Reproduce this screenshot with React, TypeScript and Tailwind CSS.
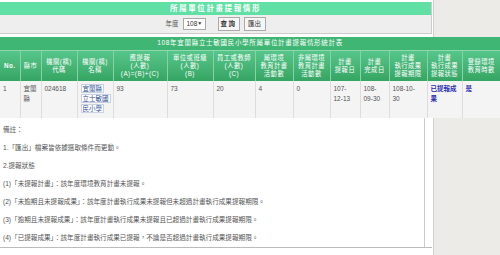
import React from 'react';

const cols = [20, 21, 36, 36, 54, 46, 42, 38, 37, 30, 29, 38, 35, 38];

const headers: React.ReactNode[] = [
  <span className="font-bold">No.</span>,
  '縣市',
  <>機關(構)<br />代碼</>,
  <>機關(構)<br />名稱</>,
  <>應提報<br />(人數)<br />(A)=(B)+(C)</>,
  <>單位或班級<br />(人數)<br />(B)</>,
  <>員工或教師<br />(人數)<br />(C)</>,
  <>屬環境<br />教育計畫<br />活動數</>,
  <>非屬環境<br />教育計畫<br />活動數</>,
  <>計畫<br />提報日</>,
  <>計畫<br />完成日</>,
  <>計畫<br />執行成果<br />提報期限</>,
  <>計畫<br />執行成果<br />提報狀態</>,
  <>登錄環境<br />教育時數</>,
];

const notes = [
  '備註：',
  '1.「匯出」檔案皆依據選取條件而更動。',
  '2.提報狀態',
  '(1)「未提報計畫」：該年度環境教育計畫未提報。',
  '(2)「未逾期且未提報成果」：該年度計畫執行成果未提報但未超過計畫執行成果提報期限。',
  '(3)「逾期且未提報成果」：該年度計畫執行成果未提報且已超過計畫執行成果提報期限。',
  '(4)「已提報成果」：該年度計畫執行成果已提報，不論是否超過計畫執行成果提報期限。',
];

export default function App() {
  return (
    <div className="w-[500px] h-[255px] overflow-hidden bg-[#ecebe8] font-['Liberation_Sans','Noto_Sans_CJK_TC',sans-serif]">
      <div className="w-[434px] h-full bg-white border-r border-[#cfcfcf] pt-[2px]">
        {/* Search box */}
        <div className="w-[432px] border-r border-[#cccccc]">
          <div className="h-[13px] bg-[#60e0a4] flex items-center justify-center text-white font-bold text-[7.5px] tracking-[1.6px]">
            所屬單位計畫提報情形
          </div>
          <div className="h-[19px] bg-[#eeeeee] border-b border-[#cccccc] flex items-center justify-center text-[6.5px] text-[#555]">
            <span className="mr-[4px]">年度</span>
            <div className="w-[23px] h-[12px] bg-white border border-[#aaaaaa] flex items-center justify-between px-[3px] text-[#333]">
              <span>108</span>
              <span className="text-[5px]">▼</span>
            </div>
            <div className="ml-[12px] w-[22px] h-[14px] border border-[#aaaaaa] bg-[#f6f6f6] flex items-center justify-center font-bold text-[#333] tracking-[1.5px]">
              查詢
            </div>
            <div className="ml-[4px] w-[22px] h-[14px] border border-[#aaaaaa] bg-[#f6f6f6] flex items-center justify-center text-[#333]">
              匯出
            </div>
          </div>
        </div>

        {/* Stats table */}
        <table className="mt-[3px] w-[500px] table-fixed border-collapse">
          <colgroup>
            {cols.map((w, i) => (
              <col key={i} style={{ width: w }} />
            ))}
          </colgroup>
          <thead>
            <tr className="h-[13px] bg-[#40b674]">
              <th colSpan={14} className="text-white font-normal text-[6.5px] tracking-[0.7px] text-center border-b border-[#8fd8ae]">
                108年宜蘭縣立士敏國民小學所屬單位計畫提報情形統計表
              </th>
            </tr>
            <tr className="h-[31px] bg-gradient-to-b from-[#58c78c] to-[#35a563]">
              {headers.map((h, i) => (
                <th
                  key={i}
                  className="text-white font-normal text-[6.3px] leading-[7.6px] tracking-[0.5px] text-center align-middle border-r border-[#86d3a6] last:border-r-0 px-0"
                >
                  {h}
                </th>
              ))}
            </tr>
          </thead>
          <tbody>
            <tr className="h-[37px] bg-[#f4f4f4] text-[6.5px] leading-[10px] text-[#555] align-top">
              <td className="border-r border-[#dddddd] pt-[3px] px-[3px]">1</td>
              <td className="border-r border-[#dddddd] pt-[3px] px-[3px]">宜蘭<br />縣</td>
              <td className="border-r border-[#dddddd] pt-[3px] px-[3px]">024618</td>
              <td className="border-r border-[#dddddd] pt-[3px] px-[3px]">
                <span className="border border-[#c9d3e3] bg-white text-[#2f4f9a] px-[1px] box-decoration-clone">
                  宜蘭縣<br />立士敏國<br />民小學
                </span>
              </td>
              <td className="border-r border-[#dddddd] pt-[3px] px-[3px]">93</td>
              <td className="border-r border-[#dddddd] pt-[3px] px-[3px]">73</td>
              <td className="border-r border-[#dddddd] pt-[3px] px-[3px]">20</td>
              <td className="border-r border-[#dddddd] pt-[3px] px-[3px]">4</td>
              <td className="border-r border-[#dddddd] pt-[3px] px-[3px]">0</td>
              <td className="border-r border-[#dddddd] pt-[3px] px-[3px]">107-<br />12-13</td>
              <td className="border-r border-[#dddddd] pt-[3px] px-[3px]">108-<br />09-30</td>
              <td className="border-r border-[#dddddd] pt-[3px] px-[3px]">108-10-<br />30</td>
              <td className="border-r border-[#dddddd] pt-[3px] px-[3px] font-bold text-[#2d2db4]">已提報成<br />果</td>
              <td className="pt-[3px] px-[3px] font-bold text-[#2d2db4]">是</td>
            </tr>
          </tbody>
        </table>

        {/* Notes */}
        <div className="w-[432px] border-b border-[#bbbbbb]">
          <div className="w-[425px] border-r border-[#cccccc] pt-[3px] px-[3px] text-[6.6px] text-[#555]">
            {notes.map((n, i) => (
              <div key={i} className="h-[18px] leading-[18px] whitespace-nowrap">
                {n}
              </div>
            ))}
          </div>
        </div>
      </div>
    </div>
  );
}
